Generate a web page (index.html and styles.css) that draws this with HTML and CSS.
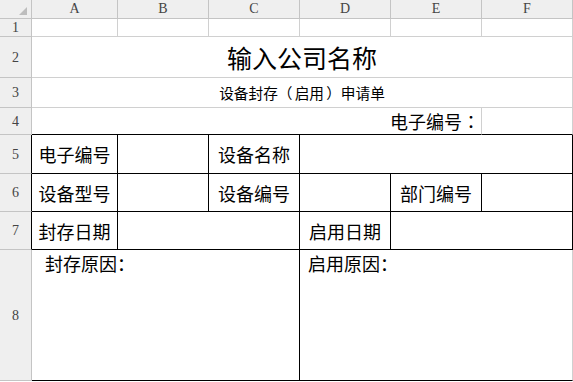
FILE: index.html
```html
<!DOCTYPE html>
<html lang="zh-CN">
<head>
<meta charset="utf-8">
<title>设备封存（启用）申请单</title>
<link rel="stylesheet" href="styles.css">
</head>
<body>
<div class="sheet">
  <div class="hd corner"><svg width="8" height="8" viewBox="0 0 8 8"><polygon points="8,0 8,8 0,8" fill="#bdbdbd"/></svg></div>
  <div class="hd col">A</div>
  <div class="hd col">B</div>
  <div class="hd col">C</div>
  <div class="hd col">D</div>
  <div class="hd col">E</div>
  <div class="hd col">F</div>

  <div class="hd rh">1</div>
  <div class="c"></div><div class="c"></div><div class="c"></div><div class="c"></div><div class="c"></div><div class="c"></div>

  <div class="hd rh">2</div>
  <div class="c span6 title">输入公司名称</div>

  <div class="hd rh">3</div>
  <div class="c span6 sub">设备封存<span class="po">（</span>启用<span class="pc">）</span>申请单</div>

  <div class="hd rh">4</div>
  <div class="c span5 code bb">电子编号<span class="p">：</span></div>
  <div class="c bb"></div>

  <div class="hd rh br">5</div>
  <div class="c k lbl">电子编号</div>
  <div class="c k"></div>
  <div class="c k lbl">设备名称</div>
  <div class="c k span3"></div>

  <div class="hd rh br">6</div>
  <div class="c k lbl">设备型号</div>
  <div class="c k"></div>
  <div class="c k lbl">设备编号</div>
  <div class="c k"></div>
  <div class="c k lbl">部门编号</div>
  <div class="c k"></div>

  <div class="hd rh br">7</div>
  <div class="c k lbl">封存日期</div>
  <div class="c k span2"></div>
  <div class="c k lbl">启用日期</div>
  <div class="c k span2"></div>

  <div class="hd rh">8</div>
  <div class="c k span3 reason reason-a">封存原因<span class="p">：</span></div>
  <div class="c bb span3 reason reason-b">启用原因<span class="p">：</span></div>
</div>
</body>
</html>
```
FILE: styles.css
```css
html, body {
  margin: 0;
  padding: 0;
  background: #ffffff;
}

.sheet {
  display: grid;
  grid-template-columns: 32px 86px 91px 91px 91px 91px 91px;
  grid-template-rows: 19px 18px 41px 30px 27px 39px 38px 38px 131px;
  font-family: "Noto Sans CJK SC", "Noto Sans", sans-serif;
  color: #000;
}

.sheet > div {
  box-sizing: border-box;
  border-right: 1px solid #d0d0d0;
  border-bottom: 1px solid #d0d0d0;
}

.hd {
  background: #efefef;
  border-right-color: #c4c4c4 !important;
  border-bottom-color: #c4c4c4 !important;
  font-family: "Liberation Serif", "DejaVu Serif", serif;
  font-size: 14px;
  color: #444;
  display: flex;
  align-items: center;
  justify-content: center;
}

.corner {
  justify-content: flex-end;
  align-items: flex-end;
  padding: 0 4px 3px 0;
}

.corner svg {
  display: block;
}

.rh {
  padding-top: 1px;
}

.sheet > .br {
  border-right-color: #000 !important;
}

.span2 { grid-column: span 2; }
.span3 { grid-column: span 3; }
.span5 { grid-column: span 5; }
.span6 { grid-column: span 6; }

.p {
  font-family: "Noto Sans CJK TC", "Noto Sans CJK SC", sans-serif;
}

.po {
  margin-right: 0.15em;
}

.pc {
  margin-left: 0.15em;
}

.title {
  display: flex;
  align-items: center;
  justify-content: center;
  font-size: 25px;
}

.sub {
  display: flex;
  align-items: center;
  justify-content: center;
  font-size: 14.67px;
}

.code {
  display: flex;
  align-items: center;
  justify-content: flex-end;
  font-size: 18px;
  padding-right: 1px;
}

.sheet > .bb {
  border-bottom-color: #000;
}

.sheet > .k {
  border-right-color: #000;
  border-bottom-color: #000;
}

.lbl {
  display: flex;
  align-items: center;
  justify-content: center;
  font-size: 18px;
}

.reason {
  font-size: 18px;
  line-height: 20px;
  padding-top: 3px;
}

.reason-a {
  padding-left: 13px;
}

.reason-b {
  padding-left: 8px;
}
```
